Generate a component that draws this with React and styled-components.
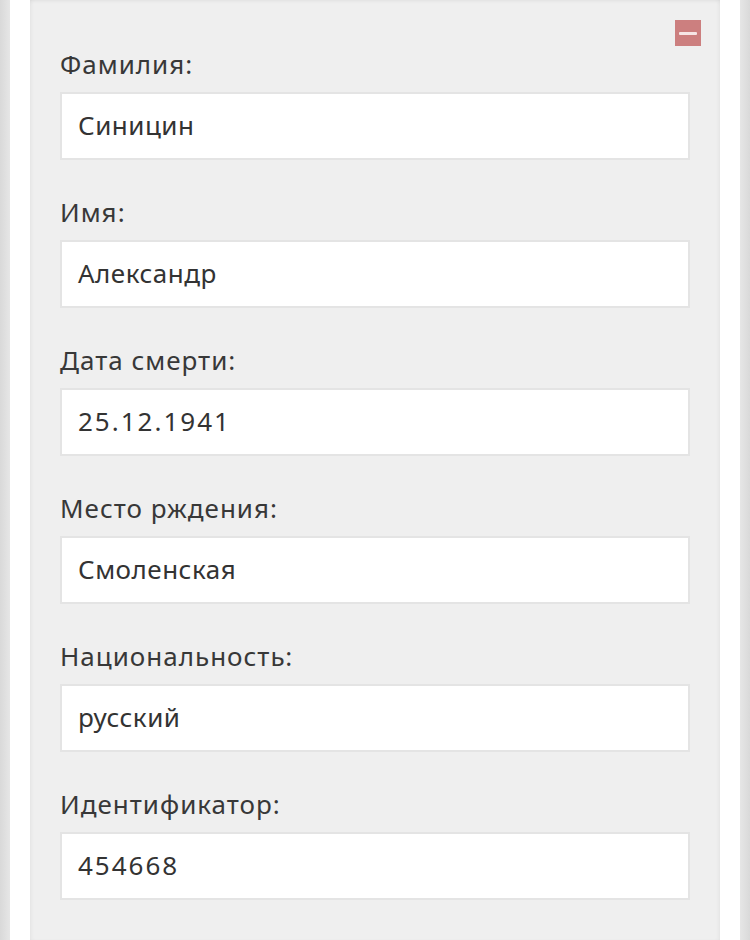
import React from "react";
import styled, { createGlobalStyle } from "styled-components";

const Global = createGlobalStyle`
  html, body { margin: 0; padding: 0; background: #ffffff; }
  body { font-family: "Noto Sans", "Open Sans", sans-serif; }
  * { box-sizing: border-box; }
`;

const Outer = styled.div`
  min-height: 940px;
  padding: 0 10px;
  background: linear-gradient(to right, #d9d9d9, #e6e6e6 10px, #e6e6e6 calc(100% - 10px), #d9d9d9);
  display: flex;
`;

const Column = styled.div`
  flex: 1;
  background: #ffffff;
  padding: 0 20px;
  display: flex;
`;

const Panel = styled.section`
  position: relative;
  flex: 1;
  background: #efefef;
  box-shadow: inset 0 3px 4px -2px rgba(0, 0, 0, 0.06), inset 3px 0 4px -2px rgba(0, 0, 0, 0.05),
    inset -3px 0 4px -2px rgba(0, 0, 0, 0.05);
  padding: 46px 30px 40px;
  display: flex;
  flex-direction: column;
  gap: 34px;
`;

const RemoveButton = styled.button`
  position: absolute;
  top: 20px;
  right: 19px;
  width: 26px;
  height: 26px;
  padding: 0;
  border: none;
  background: #cc7f7f;
  display: flex;
  align-items: center;
  justify-content: center;
  cursor: pointer;
  &::after {
    content: "";
    width: 18px;
    height: 3px;
    border-radius: 1px;
    background: #f6e6e6;
  }
`;

const Field = styled.div`
  display: flex;
  flex-direction: column;
  gap: 10px;
`;

const Label = styled.label`
  font-size: 26px;
  line-height: 36px;
  color: #383838;
  letter-spacing: 1px;
`;

const Input = styled.div`
  height: 68px;
  border: 2px solid #e4e4e4;
  background: #ffffff;
  padding: 0 16px 3px;
  display: flex;
  align-items: center;
  font-size: 26px;
  color: #333333;
  letter-spacing: ${(p) => (p.$numeric ? "2px" : "0.5px")};
`;

const fields = [
  ["Фамилия:", "Синицин"],
  ["Имя:", "Александр"],
  ["Дата смерти:", "25.12.1941", true],
  ["Место рждения:", "Смоленская"],
  ["Национальность:", "русский"],
  ["Идентификатор:", "454668", true],
];

export default function App() {
  return (
    <>
      <Global />
      <Outer>
        <Column>
          <Panel>
            <RemoveButton aria-label="Удалить" />
            {fields.map(([label, value, numeric]) => (
              <Field key={label}>
                <Label>{label}</Label>
                <Input $numeric={numeric}>{value}</Input>
              </Field>
            ))}
          </Panel>
        </Column>
      </Outer>
    </>
  );
}
